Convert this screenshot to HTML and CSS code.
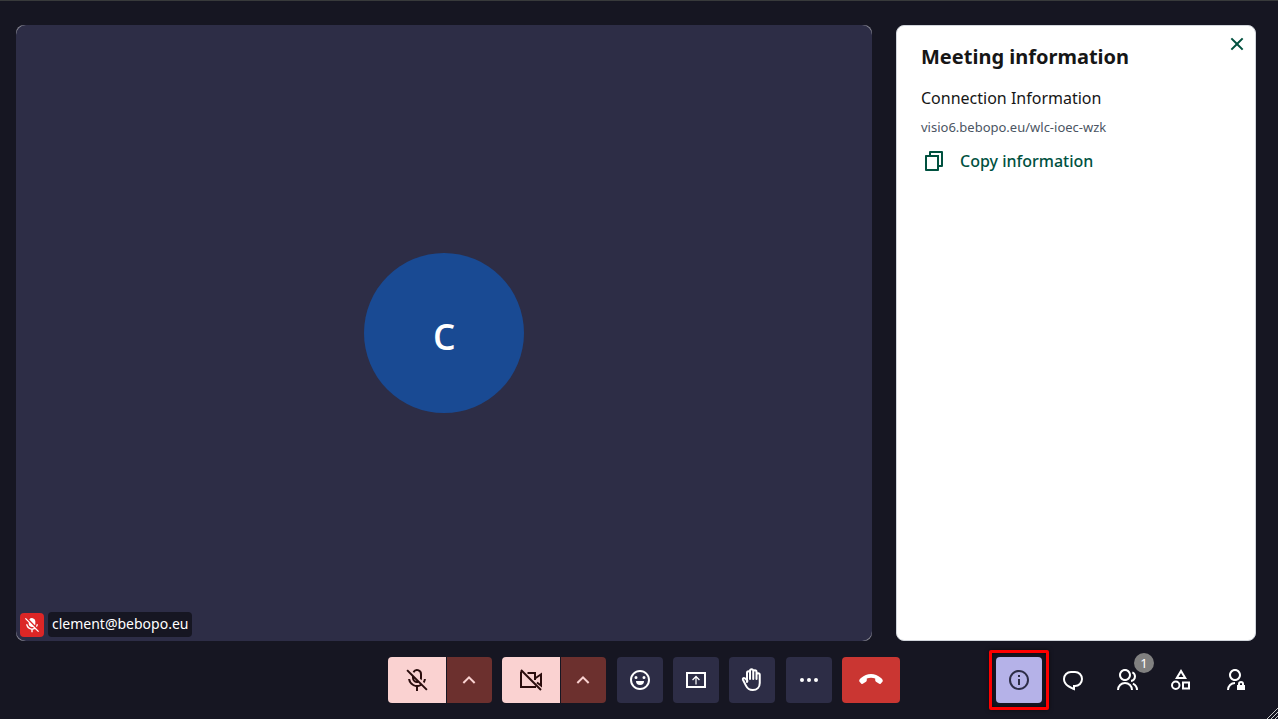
FILE: index.html
```html
<!DOCTYPE html>
<html lang="en">
<head>
  <meta charset="UTF-8">
  <meta name="viewport" content="width=device-width, initial-scale=1.0">
  <title>Meeting</title>
  <link rel="stylesheet" href="styles.css">
</head>
<body>
  <main class="room">
    <section class="tile" aria-label="Participant">
      <div class="video">
        <div class="avatar">c</div>
      </div>
      <div class="participant">
        <span class="muted">
          <svg class="icon-small" viewBox="0 0 24 24"><path d="M16.425 17.839A9 9 0 0 1 13 18.945V23h-2v-4.055A9 9 0 0 1 3.055 11H5.07a7 7 0 0 0 9.895 5.379l-1.551-1.551A5 5 0 0 1 7 10V8.414L1.393 2.808l1.415-1.415 19.799 19.8-1.415 1.414zM19.375 15.16l-1.443-1.442A7 7 0 0 0 18.93 11h2.016a9 9 0 0 1-1.571 4.16zM16.465 12.25 7.919 3.704A5 5 0 0 1 17 6v4a5 5 0 0 1-.535 2.25z"/></svg>
        </span>
        <span class="name">clement@bebopo.eu</span>
      </div>
    </section>

    <aside class="panel">
      <button class="close" aria-label="Close">
        <svg class="icon" viewBox="0 0 24 24"><path d="M12 10.586l4.95-4.95 1.415 1.414-4.95 4.95 4.95 4.95-1.415 1.414-4.95-4.95-4.95 4.95-1.413-1.414 4.95-4.95-4.95-4.95L7.05 5.636z"/></svg>
      </button>
      <h1>Meeting information</h1>
      <h2>Connection Information</h2>
      <p class="address">visio6.bebopo.eu/wlc-ioec-wzk</p>
      <button class="copy">
        <svg class="icon" viewBox="0 0 24 24"><path d="M7 6V3a1 1 0 0 1 1-1h12a1 1 0 0 1 1 1v14a1 1 0 0 1-1 1h-3v3c0 .552-.45 1-1.007 1H4.007A1 1 0 0 1 3 21L3.003 7c0-.552.45-1 1.007-1zM5.003 8 5 20h10V8zM9 6h8v10h2V4H9z"/></svg>
        Copy information
      </button>
    </aside>
  </main>

  <footer class="bar">
    <div class="controls">
      <div class="split">
        <button class="off" aria-label="Enable microphone">
          <svg class="icon" viewBox="0 0 24 24"><path d="M16.425 17.839A9 9 0 0 1 13 18.945V23h-2v-4.055A9 9 0 0 1 3.055 11H5.07a7 7 0 0 0 9.895 5.379l-1.551-1.551A5 5 0 0 1 7 10V8.414L1.393 2.808l1.415-1.415 19.799 19.8-1.415 1.414zM11.573 12.986 9.015 10.428a3 3 0 0 0 2.558 2.558zM19.375 15.16l-1.443-1.442A7 7 0 0 0 18.93 11h2.016a9 9 0 0 1-1.571 4.16zM16.465 12.25l-1.545-1.545c.052-.226.08-.462.08-.705V6a3 3 0 0 0-5.818-1.034L7.686 3.471A5 5 0 0 1 17 6v4a5 5 0 0 1-.535 2.25z"/></svg>
        </button>
        <button class="arrow" aria-label="Microphone options">
          <svg class="icon" viewBox="0 0 24 24"><path d="M12 10.828l-4.95 4.95-1.414-1.414L12 8l6.364 6.364-1.414 1.414z"/></svg>
        </button>
      </div>
      <div class="split">
        <button class="off" aria-label="Enable camera">
          <svg class="icon line" viewBox="0 0 24 24"><path d="M2 2l20 20M2 3.500V19h15M8.500 5H16v7M16 10.500l6-4.200V17.500l-4-3"/></svg>
        </button>
        <button class="arrow" aria-label="Camera options">
          <svg class="icon" viewBox="0 0 24 24"><path d="M12 10.828l-4.95 4.95-1.414-1.414L12 8l6.364 6.364-1.414 1.414z"/></svg>
        </button>
      </div>
      <button class="square" aria-label="Reactions">
        <svg class="icon" viewBox="0 0 24 24"><path d="M12 22C6.477 22 2 17.523 2 12S6.477 2 12 2s10 4.477 10 10-4.477 10-10 10zm0-2a8 8 0 1 0 0-16 8 8 0 0 0 0 16zm-4-7h8a4 4 0 1 1-8 0zm0-2a1.5 1.5 0 1 1 0-3 1.5 1.5 0 0 1 0 3zm8 0a1.5 1.5 0 1 1 0-3 1.5 1.5 0 0 1 0 3z"/></svg>
      </button>
      <button class="square" aria-label="Share screen">
        <svg class="icon" viewBox="0 0 24 24"><path fill-rule="evenodd" d="M2 4h20v16H2zM4 6v12h16V6z"/><path d="M11.400 16.500V10l-2.400 2.400-.9-.9L12 7.600l3.900 3.900-.9.9-2.400-2.400v6.500z"/></svg>
      </button>
      <button class="square" aria-label="Raise hand">
        <svg class="icon line hand" viewBox="0 0 24 24"><path d="M7 14V4.750a1.500 1.500 0 0 1 3 0M10 11V2.750a1.500 1.500 0 0 1 3.250 0V11M13.250 3.750a1.500 1.500 0 0 1 3.250 0V11M16.500 6.750a1.500 1.500 0 0 1 3.250 0V15c0 4.200-2.700 7-7 7-3.500 0-5.400-1.500-6.800-4.400l-3-5.900c-.4-.9.2-1.800 1.100-1.800 1 0 2.100.9 3.450 3.100M10 4.500V11"/></svg>
      </button>
      <button class="square" aria-label="More options">
        <svg class="icon" viewBox="0 0 24 24"><path d="M5 10a2 2 0 1 0 0 4 2 2 0 0 0 0-4zm14 0a2 2 0 1 0 0 4 2 2 0 0 0 0-4zm-7 0a2 2 0 1 0 0 4 2 2 0 0 0 0-4z"/></svg>
      </button>
      <button class="leave" aria-label="Leave">
        <svg class="icon" viewBox="0 0 24 24"><path d="M.8 14.100C-.4 12.900.3 11.300 2.300 9.700 5 7.400 8.400 6 12 6s7 1.400 9.700 3.700c2 1.600 2.700 3.200 1.500 4.400l-1.300 1.300c-.6.6-1.400.7-2.100.2l-2.800-1.900c-.6-.4-.8-1-.8-1.700v-1.500C14.900 10 13.500 9.800 12 9.800s-2.900.2-4.200.7V12c0 .7-.2 1.300-.8 1.700l-2.800 1.900c-.7.500-1.500.4-2.100-.2z"/></svg>
      </button>
    </div>

    <div class="tools">
      <button class="tool selected" aria-label="Meeting information">
        <svg class="icon" viewBox="0 0 24 24"><path d="M12 22C6.477 22 2 17.523 2 12S6.477 2 12 2s10 4.477 10 10-4.477 10-10 10zm0-2a8 8 0 1 0 0-16 8 8 0 0 0 0 16zM11 7h2v2h-2zm0 4h2v6h-2z"/></svg>
      </button>
      <button class="tool" aria-label="Chat">
        <svg class="icon" viewBox="0 0 24 24"><path d="M10 3h4a8 8 0 1 1 0 16v3.500c-5-2-12-5-12-11.500a8 8 0 0 1 8-8zm2 14h2a6 6 0 1 0 0-12h-4a6 6 0 0 0-6 6c0 3.610 2.462 5.966 8 8.480z"/></svg>
      </button>
      <button class="tool" aria-label="Participants">
        <svg class="icon" viewBox="0 0 24 24"><path d="M2 22a8 8 0 1 1 16 0h-2a6 6 0 0 0-12 0zm8-9c-3.315 0-6-2.685-6-6s2.685-6 6-6 6 2.685 6 6-2.685 6-6 6zm0-2c2.210 0 4-1.790 4-4s-1.790-4-4-4-4 1.790-4 4 1.790 4 4 4zm8.284 3.703A8.002 8.002 0 0 1 23 22h-2a6.001 6.001 0 0 0-3.537-5.473zm-.688-11.290A5.500 5.500 0 0 1 21 8.500a5.499 5.499 0 0 1-5 5.478v-2.013a3.500 3.500 0 0 0 1.041-6.609z"/></svg>
        <span class="badge">1</span>
      </button>
      <button class="tool" aria-label="Tools">
        <svg class="icon" viewBox="0 0 24 24"><path fill-rule="evenodd" d="M12 1l6 10H6zm0 3.887L9.532 9h4.936zM6.750 20a2.750 2.750 0 1 0 0-5.500 2.750 2.750 0 0 0 0 5.500zm0 2a4.750 4.750 0 1 1 0-9.500 4.750 4.750 0 0 1 0 9.500zM15 15.500v4h4v-4zm-2-2h8v8h-8z"/></svg>
      </button>
      <button class="tool" aria-label="Admin">
        <svg class="icon" viewBox="0 0 24 24"><path d="M12 14v2a6 6 0 0 0-6 6H4a8 8 0 0 1 8-8zm0-1c-3.315 0-6-2.685-6-6s2.685-6 6-6 6 2.685 6 6-2.685 6-6 6zm0-2c2.210 0 4-1.790 4-4s-1.790-4-4-4-4 1.790-4 4 1.790 4 4 4z"/><path fill-rule="evenodd" d="M21 17h1v5h-8v-5h1v-1a3 3 0 1 1 6 0zm-2 0v-1a1 1 0 1 0-2 0v1z"/></svg>
      </button>
    </div>
  </footer>

  <svg class="grip" viewBox="0 0 12 12"><path d="M1 12 12 1M5 12l7-7M9 12l3-3"/></svg>
</body>
</html>
```
FILE: styles.css
```css
* {
  box-sizing: border-box;
}

body {
  margin: 0;
  height: 100vh;
  display: flex;
  flex-direction: column;
  position: relative;
  overflow: hidden;
  border-top: 1px solid #383a3b;
  background-color: #161622;
  color: #fff;
  font-family: "Noto Sans", sans-serif;
  font-size: 16px;
}

button {
  display: flex;
  align-items: center;
  justify-content: center;
  padding: 0;
  border: none;
  background: none;
  color: inherit;
  font: inherit;
  cursor: pointer;
}

.icon {
  width: 24px;
  height: 24px;
  fill: currentColor;
  flex-shrink: 0;
}

.line {
  fill: none;
  stroke: currentColor;
  stroke-width: 2;
}

.room {
  flex: 1;
  display: flex;
  gap: 24px;
  padding: 24px 22px 0 16px;
  min-height: 0;
}

/* Video tile */
.tile {
  flex: 1;
  display: flex;
  position: relative;
  border-radius: 8px;
  background-color: #8a8a96;
}

.video {
  flex: 1;
  display: flex;
  align-items: center;
  justify-content: center;
  border-radius: 10px;
  background-color: #2d2d46;
}

.avatar {
  width: 160px;
  height: 160px;
  display: flex;
  align-items: center;
  justify-content: center;
  padding-bottom: 4px;
  border-radius: 50%;
  background-color: #194a93;
  font-size: 48px;
}

.participant {
  position: absolute;
  left: 4px;
  bottom: 4px;
  display: flex;
  align-items: flex-end;
  gap: 4px;
}

.muted {
  display: flex;
  padding: 4px;
  border-radius: 4px;
  background-color: #dc2626;
}

.icon-small {
  width: 16px;
  height: 16px;
  fill: #fff;
}

.name {
  padding: 0 4px 1px;
  border-radius: 4px;
  background-color: #161622;
  font-size: 14px;
  line-height: 24px;
}

/* Side panel */
.panel {
  width: 360px;
  padding: 16px 24px;
  position: relative;
  border: 1px solid #d1d5db;
  border-radius: 8px;
  background-color: #fff;
  color: #161616;
}

.panel h1 {
  margin: 0 0 16px;
  font-size: 20px;
  line-height: 30px;
}

.panel h2 {
  margin: 0 0 8px;
  font-size: 16px;
  font-weight: 400;
  line-height: 20px;
}

.address {
  margin: 0 0 8px;
  color: #4b5563;
  font-size: 13px;
  line-height: 22px;
}

.copy {
  gap: 14px;
  padding-left: 1px;
  color: #00513f;
  font-weight: 500;
  line-height: 30px;
}

.close {
  position: absolute;
  top: 6px;
  right: 6px;
  color: #00513f;
}

/* Control bar */
.bar {
  display: grid;
  grid-template-columns: 1fr auto 1fr;
  padding: 16px 20px 16px 30px;
}

.controls {
  grid-column: 2;
  width: 512px;
  display: flex;
  justify-content: space-between;
}

.split {
  display: flex;
  gap: 1px;
}

.off {
  width: 58px;
  height: 46px;
  border-radius: 4px 0 0 4px;
  background-color: #fad2d1;
  color: #2a0d0d;
}

.arrow {
  width: 45px;
  height: 46px;
  padding-right: 1px;
  border-radius: 0 4px 4px 0;
  background-color: #6c302e;
  color: #fad2d1;
}

.square,
.tool {
  width: 46px;
  height: 46px;
  border-radius: 4px;
}

.square {
  background-color: #2d2d46;
}

.hand {
  stroke-linecap: round;
  stroke-linejoin: round;
}

.leave {
  width: 58px;
  height: 46px;
  border-radius: 4px;
  background-color: #ca3632;
}

.tools {
  display: flex;
  justify-content: flex-end;
  gap: 8px;
}

.tool {
  position: relative;
}

.selected {
  background-color: #b5b2e8;
  color: #2d2d46;
}

.selected::after {
  content: "";
  position: absolute;
  inset: -7px;
  border: 3px solid #f00;
  border-radius: 2px;
  box-shadow: 0 0 4px rgba(0, 0, 0, 0.5), inset 0 0 4px rgba(0, 0, 0, 0.5);
}

.badge {
  position: absolute;
  top: -4px;
  right: -4px;
  width: 20px;
  height: 20px;
  border-radius: 50%;
  background-color: #808080;
  font-size: 13px;
  line-height: 20px;
}

.grip {
  position: absolute;
  right: 0;
  bottom: 0;
  width: 12px;
  height: 12px;
  stroke: #ccc;
}
```
